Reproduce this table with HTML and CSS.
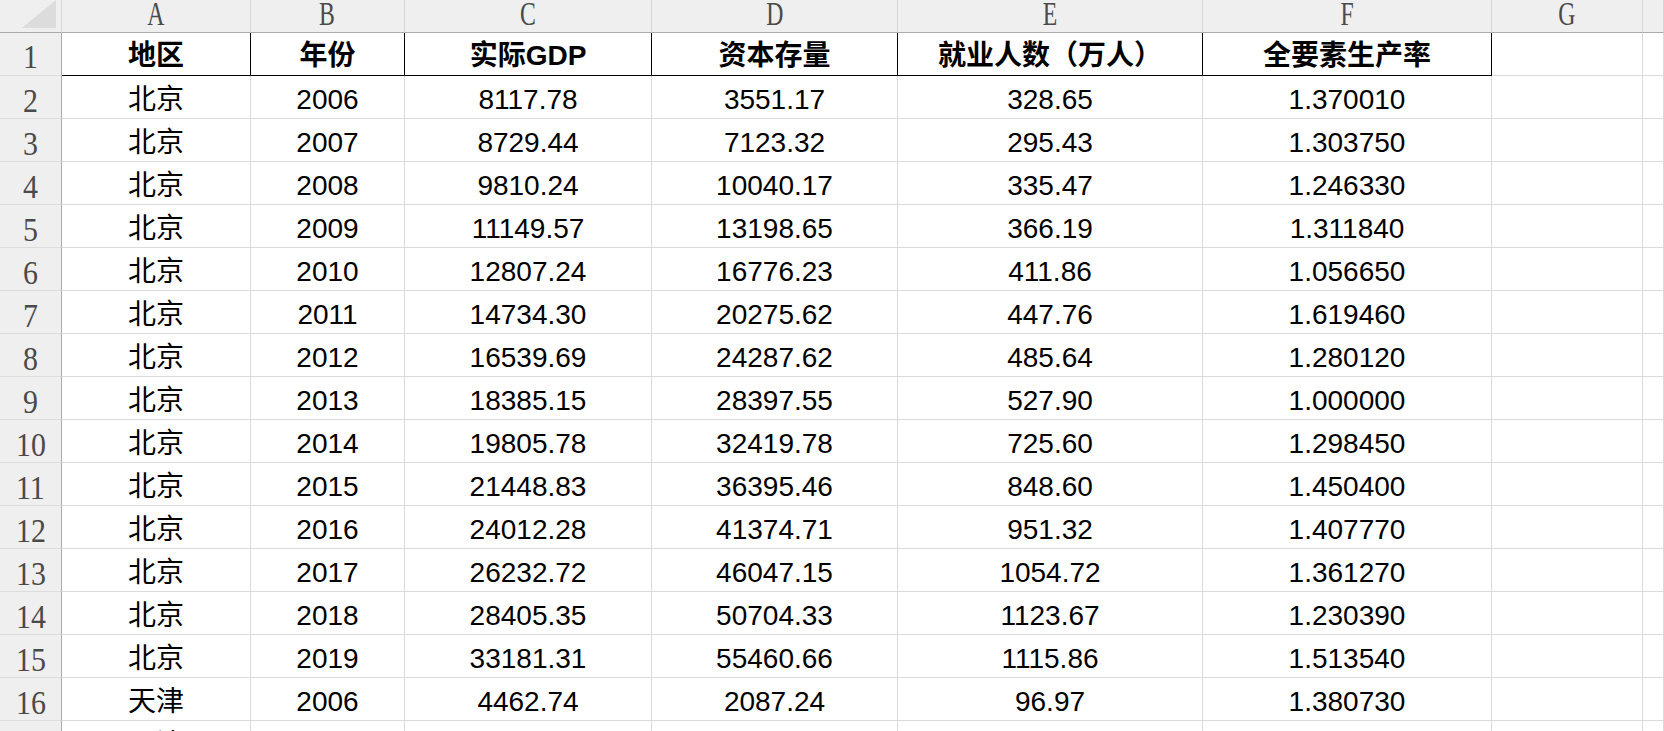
FILE: index.html
```html
<!DOCTYPE html>
<html lang="zh-CN">
<head>
<meta charset="utf-8">
<title>Sheet</title>
<link rel="stylesheet" href="styles.css">
</head>
<body>
<div class="sheet">
  <div class="corner"><svg class="corner-tri" width="36" height="30" viewBox="0 0 36 30"><polygon points="34,0 34,28 0,28" fill="#dcdcdc"/></svg></div>
  <div class="colhead"><span class="letter">A</span></div>
  <div class="colhead"><span class="letter">B</span></div>
  <div class="colhead"><span class="letter">C</span></div>
  <div class="colhead"><span class="letter">D</span></div>
  <div class="colhead"><span class="letter">E</span></div>
  <div class="colhead"><span class="letter">F</span></div>
  <div class="colhead"><span class="letter">G</span></div>
  <div class="colhead"></div>

  <div class="rowhead first"><span class="num">1</span></div>
  <div class="cell title">地区</div>
  <div class="cell title">年份</div>
  <div class="cell title">实际GDP</div>
  <div class="cell title">资本存量</div>
  <div class="cell title">就业人数（万人）</div>
  <div class="cell title">全要素生产率</div>
  <div class="cell"></div>
  <div class="cell"></div>

  <div class="rowhead"><span class="num">2</span></div>
  <div class="cell">北京</div><div class="cell">2006</div><div class="cell">8117.78</div><div class="cell">3551.17</div><div class="cell">328.65</div><div class="cell">1.370010</div><div class="cell"></div><div class="cell"></div>

  <div class="rowhead"><span class="num">3</span></div>
  <div class="cell">北京</div><div class="cell">2007</div><div class="cell">8729.44</div><div class="cell">7123.32</div><div class="cell">295.43</div><div class="cell">1.303750</div><div class="cell"></div><div class="cell"></div>

  <div class="rowhead"><span class="num">4</span></div>
  <div class="cell">北京</div><div class="cell">2008</div><div class="cell">9810.24</div><div class="cell">10040.17</div><div class="cell">335.47</div><div class="cell">1.246330</div><div class="cell"></div><div class="cell"></div>

  <div class="rowhead"><span class="num">5</span></div>
  <div class="cell">北京</div><div class="cell">2009</div><div class="cell">11149.57</div><div class="cell">13198.65</div><div class="cell">366.19</div><div class="cell">1.311840</div><div class="cell"></div><div class="cell"></div>

  <div class="rowhead"><span class="num">6</span></div>
  <div class="cell">北京</div><div class="cell">2010</div><div class="cell">12807.24</div><div class="cell">16776.23</div><div class="cell">411.86</div><div class="cell">1.056650</div><div class="cell"></div><div class="cell"></div>

  <div class="rowhead"><span class="num">7</span></div>
  <div class="cell">北京</div><div class="cell">2011</div><div class="cell">14734.30</div><div class="cell">20275.62</div><div class="cell">447.76</div><div class="cell">1.619460</div><div class="cell"></div><div class="cell"></div>

  <div class="rowhead"><span class="num">8</span></div>
  <div class="cell">北京</div><div class="cell">2012</div><div class="cell">16539.69</div><div class="cell">24287.62</div><div class="cell">485.64</div><div class="cell">1.280120</div><div class="cell"></div><div class="cell"></div>

  <div class="rowhead"><span class="num">9</span></div>
  <div class="cell">北京</div><div class="cell">2013</div><div class="cell">18385.15</div><div class="cell">28397.55</div><div class="cell">527.90</div><div class="cell">1.000000</div><div class="cell"></div><div class="cell"></div>

  <div class="rowhead"><span class="num">10</span></div>
  <div class="cell">北京</div><div class="cell">2014</div><div class="cell">19805.78</div><div class="cell">32419.78</div><div class="cell">725.60</div><div class="cell">1.298450</div><div class="cell"></div><div class="cell"></div>

  <div class="rowhead"><span class="num">11</span></div>
  <div class="cell">北京</div><div class="cell">2015</div><div class="cell">21448.83</div><div class="cell">36395.46</div><div class="cell">848.60</div><div class="cell">1.450400</div><div class="cell"></div><div class="cell"></div>

  <div class="rowhead"><span class="num">12</span></div>
  <div class="cell">北京</div><div class="cell">2016</div><div class="cell">24012.28</div><div class="cell">41374.71</div><div class="cell">951.32</div><div class="cell">1.407770</div><div class="cell"></div><div class="cell"></div>

  <div class="rowhead"><span class="num">13</span></div>
  <div class="cell">北京</div><div class="cell">2017</div><div class="cell">26232.72</div><div class="cell">46047.15</div><div class="cell">1054.72</div><div class="cell">1.361270</div><div class="cell"></div><div class="cell"></div>

  <div class="rowhead"><span class="num">14</span></div>
  <div class="cell">北京</div><div class="cell">2018</div><div class="cell">28405.35</div><div class="cell">50704.33</div><div class="cell">1123.67</div><div class="cell">1.230390</div><div class="cell"></div><div class="cell"></div>

  <div class="rowhead"><span class="num">15</span></div>
  <div class="cell">北京</div><div class="cell">2019</div><div class="cell">33181.31</div><div class="cell">55460.66</div><div class="cell">1115.86</div><div class="cell">1.513540</div><div class="cell"></div><div class="cell"></div>

  <div class="rowhead"><span class="num">16</span></div>
  <div class="cell">天津</div><div class="cell">2006</div><div class="cell">4462.74</div><div class="cell">2087.24</div><div class="cell">96.97</div><div class="cell">1.380730</div><div class="cell"></div><div class="cell"></div>

  <div class="rowhead"><span class="num">17</span></div>
  <div class="cell">天津</div><div class="cell">2007</div><div class="cell">5252.76</div><div class="cell">2600.81</div><div class="cell">101.01</div><div class="cell">1.405520</div><div class="cell"></div><div class="cell"></div>
</div>
</body>
</html>
```

FILE: styles.css
```css
html, body {
  margin: 0;
  padding: 0;
  background: #ffffff;
  overflow: hidden;
}

.sheet {
  display: grid;
  width: 1664px;
  height: 731px;
  overflow: hidden;
  grid-template-columns: 62px 189px 154px 247px 246px 305px 289px 151px 1fr;
  grid-template-rows: 33px;
  grid-auto-rows: 43px;
}

.corner {
  box-sizing: border-box;
  background: #efefef;
  border-right: 1px solid #d6d6d6;
  border-bottom: 1px solid #ababab;
  display: flex;
  justify-content: flex-end;
  padding-right: 3px;
}

.corner-tri {
  display: block;
}

.colhead {
  box-sizing: border-box;
  background: #efefef;
  border-right: 1px solid #d6d6d6;
  border-bottom: 1px solid #ababab;
  text-align: center;
  font-family: "Liberation Serif", serif;
  font-size: 33px;
  line-height: 28px;
  color: #4a4a4a;
}

.letter {
  display: inline-block;
  transform: scaleX(0.72);
}

.rowhead {
  box-sizing: border-box;
  background: #efefef;
  border-right: 1px solid #ababab;
  border-bottom: 1px solid #dcdcdc;
  text-align: center;
  font-family: "Liberation Serif", serif;
  font-size: 34px;
  line-height: 34px;
  padding-top: 8px;
  color: #4a4a4a;
}

.rowhead.first {
  padding-top: 7px;
}

.num {
  display: inline-block;
  transform: scaleX(0.88);
}

.cell {
  box-sizing: border-box;
  border-right: 1px solid #dadada;
  border-bottom: 1px solid #dadada;
  text-align: center;
  font-family: "Liberation Sans", "Noto Sans CJK SC", sans-serif;
  font-size: 28px;
  line-height: 28px;
  padding-top: 10px;
  color: #000000;
  white-space: nowrap;
  overflow: hidden;
}

.cell.title {
  font-weight: bold;
  border-right-color: #000000;
  border-bottom-color: #000000;
  padding-top: 9px;
}
```
